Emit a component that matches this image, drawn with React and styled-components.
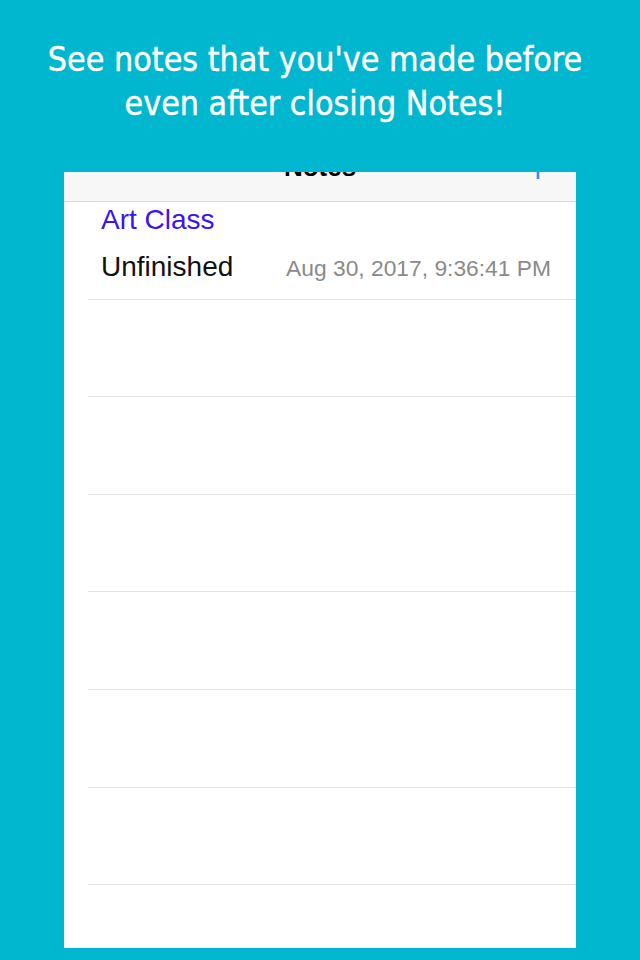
import React from "react";
import styled, { createGlobalStyle } from "styled-components";

const Global = createGlobalStyle`
  html, body { margin: 0; padding: 0; background: #01b7cf; }
  body { width: 640px; height: 960px; overflow: hidden; }
`;

const Page = styled.div`
  width: 640px;
  height: 960px;
  background: #01b7cf;
  display: flex;
  flex-direction: column;
  align-items: center;
`;

const Heading = styled.h1`
  margin: 38px 0 0;
  height: 134px;
  font-family: "DejaVu Sans Condensed", "DejaVu Sans", sans-serif;
  font-weight: normal;
  font-size: 33.7px;
  line-height: 44px;
  color: #ffffff;
  -webkit-text-stroke: 0.4px #ffffff;
  text-align: center;
  transform: translateX(-5px);
`;

const Phone = styled.div`
  width: 512px;
  height: 776px;
  background: #ffffff;
  overflow: hidden;
  display: flex;
  flex-direction: column;
`;

const NavBar = styled.div`
  height: 29px;
  flex: none;
  background: #f7f7f7;
  border-bottom: 1px solid #dadada;
  display: grid;
  grid-template-columns: 1fr auto 1fr;
  align-items: end;
  overflow: hidden;
  padding-bottom: 21px;
  box-sizing: content-box;
  margin-top: -21px;
`;

const NavTitle = styled.div`
  grid-column: 2;
  font-family: "Liberation Sans", Arial, sans-serif;
  font-weight: bold;
  font-size: 26px;
  line-height: 26px;
  color: #000;
`;

const NavButton = styled.div`
  grid-column: 3;
  justify-self: end;
  margin-right: 25px;
  display: flex;
  align-self: end;
`;

const List = styled.div`
  display: flex;
  flex-direction: column;
`;

const Row = styled.div`
  height: 97.6px;
  box-sizing: border-box;
  margin-left: 24px;
  border-bottom: 1px solid #e3e3e3;
  padding: 0 25px 0 13px;
  display: flex;
  flex-direction: column;
  justify-content: flex-start;
`;

const NoteTitle = styled.div`
  font-family: "Liberation Sans", Arial, sans-serif;
  font-size: 28px;
  line-height: 32px;
  margin-top: 2px;
  color: #3c14f2;
`;

const NoteLine = styled.div`
  display: flex;
  justify-content: space-between;
  align-items: baseline;
  margin-top: 15px;
`;

const NoteBody = styled.span`
  font-family: "Liberation Sans", Arial, sans-serif;
  font-size: 28px;
  line-height: 32px;
  color: #111;
`;

const NoteDate = styled.span`
  font-family: "Liberation Sans", Arial, sans-serif;
  font-size: 22.8px;
  color: #8a8a8a;
`;

const notes = [{ title: "Art Class", body: "Unfinished", date: "Aug 30, 2017, 9:36:41 PM" }];

export default function App() {
  const empty = Array.from({ length: 7 });
  return (
    <>
      <Global />
      <Page>
        <Heading>
          See notes that you've made before
          <br />
          even after closing Notes!
        </Heading>
        <Phone>
          <NavBar>
            <NavTitle>Notes</NavTitle>
            <NavButton>
              <svg width="26" height="26" viewBox="0 0 26 26">
                <path d="M13 1v24M1 13h24" stroke="#3f87f0" strokeWidth="2.6" fill="none" />
              </svg>
            </NavButton>
          </NavBar>
          <List>
            {notes.map((n) => (
              <Row key={n.title}>
                <NoteTitle>{n.title}</NoteTitle>
                <NoteLine>
                  <NoteBody>{n.body}</NoteBody>
                  <NoteDate>{n.date}</NoteDate>
                </NoteLine>
              </Row>
            ))}
            {empty.map((_, i) => (
              <Row key={i} />
            ))}
          </List>
        </Phone>
      </Page>
    </>
  );
}
